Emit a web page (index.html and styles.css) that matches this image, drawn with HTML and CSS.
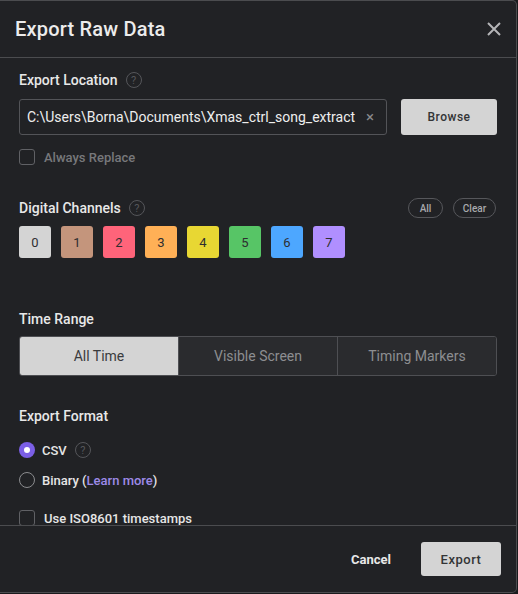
FILE: index.html
```html
<!DOCTYPE html>
<html>
<head>
<meta charset="utf-8">
<link rel="stylesheet" href="styles.css">
</head>
<body>
<div class="dialog">
  <div class="header">
    <div class="title">Export Raw Data</div>
    <svg class="close" width="14" height="14" viewBox="0 0 14 14"><path d="M1 1L13 13M13 1L1 13" stroke="#b4b5b7" stroke-width="2" fill="none"/></svg>
  </div>
  <div class="content">
    <div class="label-row"><span class="label">Export Location</span><span class="help">?</span></div>
    <div class="location-row">
      <div class="input"><span class="path">C:\Users\Borna\Documents\Xmas_ctrl_song_extract</span><span class="clear-x">×</span></div>
      <button class="btn-light browse">Browse</button>
    </div>
    <div class="check-row dim"><span class="checkbox"></span><span>Always Replace</span></div>

    <div class="channels-head">
      <div class="label-row nomargin"><span class="label">Digital Channels</span><span class="help">?</span></div>
      <div class="pills"><button class="pill">All</button><button class="pill">Clear</button></div>
    </div>
    <div class="channels">
      <div class="ch c0">0</div>
      <div class="ch c1">1</div>
      <div class="ch c2">2</div>
      <div class="ch c3">3</div>
      <div class="ch c4">4</div>
      <div class="ch c5">5</div>
      <div class="ch c6">6</div>
      <div class="ch c7">7</div>
    </div>

    <div class="label-row section-time"><span class="label">Time Range</span></div>
    <div class="segmented">
      <div class="seg active">All Time</div>
      <div class="seg">Visible Screen</div>
      <div class="seg">Timing Markers</div>
    </div>

    <div class="label-row section-format"><span class="label">Export Format</span></div>
    <div class="radio-row first"><span class="radio checked"></span><span class="opt">CSV</span><span class="help">?</span></div>
    <div class="radio-row"><span class="radio"></span><span class="opt">Binary (<span class="link">Learn more</span>)</span></div>
    <div class="check-row iso"><span class="checkbox"></span><span class="opt">Use ISO8601 timestamps</span></div>
  </div>
  <div class="footer">
    <button class="cancel">Cancel</button>
    <button class="btn-light export">Export</button>
  </div>
</div>
</body>
</html>
```

FILE: styles.css
```css
* { box-sizing: border-box; }
html, body { margin: 0; padding: 0; background: #1a1b1d; }
body { font-family: Roboto, "Liberation Sans", sans-serif; width: 518px; height: 594px; overflow: hidden; }
button { font-family: inherit; border: none; cursor: pointer; padding: 0; }

.dialog {
  width: 517px;
  height: 593px;
  background: #212225;
  border-top: 1px solid #4b4c4f;
  border-right: 1px solid #4b4c4f;
  border-bottom: 1px solid #4b4c4f;
  border-radius: 0 5px 5px 0;
  display: flex;
  flex-direction: column;
}

.header {
  height: 57px;
  border-bottom: 1px solid #4b4c4f;
  display: flex;
  align-items: center;
  justify-content: space-between;
  padding: 0 15px 0 15px;
  flex-shrink: 0;
}
.title { font-size: 20px; font-weight: 500; color: #ececec; padding-bottom: 1px; letter-spacing: 0.2px; }
.close { margin-right: 0; margin-top: -1px; }

.content {
  height: 467px;
  overflow: hidden;
  padding: 13px 0 0 19px;
  flex-shrink: 0;
}

.label-row { display: flex; align-items: center; height: 18px; gap: 8px; }
.label { font-size: 14px; font-weight: 500; color: #e8e8e8; }
.help {
  width: 16px; height: 16px; border-radius: 50%;
  border: 1px solid #55565a; color: #55565a;
  font-size: 11px; display: flex; align-items: center; justify-content: center;
  line-height: 1;
}

.location-row { display: flex; gap: 14px; margin-top: 10px; height: 36px; }
.input {
  width: 368px; height: 36px;
  border: 1px solid #535458; border-radius: 3px;
  display: flex; align-items: center;
  padding: 0 8px 0 7px;
  overflow: hidden;
}
.path { font-size: 14px; color: #eeeeee; white-space: nowrap; flex: 1; overflow: hidden; }
.clear-x { color: #8a8b8e; font-size: 15px; margin-left: 10px; margin-right: 4px; }
.btn-light {
  background: #d4d4d4; color: #333436; border-radius: 3px;
  font-size: 12px; font-weight: 500; letter-spacing: 0.5px;
}
.browse { width: 96px; height: 36px; }

.check-row { display: flex; align-items: center; gap: 9px; height: 16px; font-size: 13px; }
.check-row.dim { margin-top: 14px; color: #77787b; font-weight: 500; }
.checkbox { width: 16px; height: 16px; border: 1px solid #606165; border-radius: 3px; flex-shrink: 0; }

.channels-head { display: flex; justify-content: space-between; align-items: center; margin-top: 33px; height: 20px; padding-right: 20px; }
.nomargin { margin: 0; }
.pills { display: flex; gap: 10px; }
.pill {
  height: 20px; border: 1px solid #56575b; border-radius: 10px;
  background: transparent; color: #a8a9ac; font-size: 10px; font-weight: 500;
  padding: 0 8px;
}
.pills .pill:first-child { width: 35px; }
.pills .pill:last-child { width: 43px; }

.channels { display: flex; gap: 10px; margin-top: 8px; }
.ch {
  width: 32px; height: 32px; border-radius: 3px;
  display: flex; align-items: center; justify-content: center;
  font-size: 13px; color: #2e2e30;
}
.c0 { background: #d4d4d4; }
.c1 { background: #c4957c; }
.c2 { background: #ff647a; }
.c3 { background: #ffb056; }
.c4 { background: #e8d733; }
.c5 { background: #57c566; }
.c6 { background: #4da7ff; }
.c7 { background: #b08fff; }

.section-time { margin-top: 52px; }
.segmented {
  display: flex; margin-top: 8px; height: 40px; width: 478px;
  border: 1px solid #4e4f53; border-radius: 3px; overflow: hidden;
}
.seg {
  flex: 1; display: flex; align-items: center; justify-content: center;
  font-size: 14px; color: #8d8e91; background: #2a2b2e;
  border-left: 1px solid #4e4f53;
}
.seg:first-child { border-left: none; }
.seg.active { background: #d4d4d4; color: #3a3b3d; }

.section-format { margin-top: 31px; }
.radio-row { display: flex; align-items: center; height: 16px; gap: 7px; margin-top: 14px; }
.radio-row.first { margin-top: 17px; }
.radio { width: 16px; height: 16px; border-radius: 50%; border: 1px solid #8b8c8f; flex-shrink: 0; }
.radio.checked { border: none; background: #7b5fe6; display: flex; align-items: center; justify-content: center; }
.radio.checked::after { content: ""; width: 6px; height: 6px; border-radius: 50%; background: #ffffff; }
.opt { font-size: 13px; font-weight: 500; color: #e6e6e6; }
.radio-row .help { margin-left: 1px; }
.link { color: #9d8ae8; }
.check-row.iso { margin-top: 22px; }

.footer {
  flex: 1;
  border-top: 1px solid #4b4c4f;
  display: flex; justify-content: flex-end; align-items: flex-start;
  padding: 16px 15px 0 0;
  gap: 30px;
}
.cancel { background: transparent; color: #e8e8e8; font-size: 13px; font-weight: 700; height: 34px; }
.export { width: 80px; height: 34px; font-size: 13px; }
```
